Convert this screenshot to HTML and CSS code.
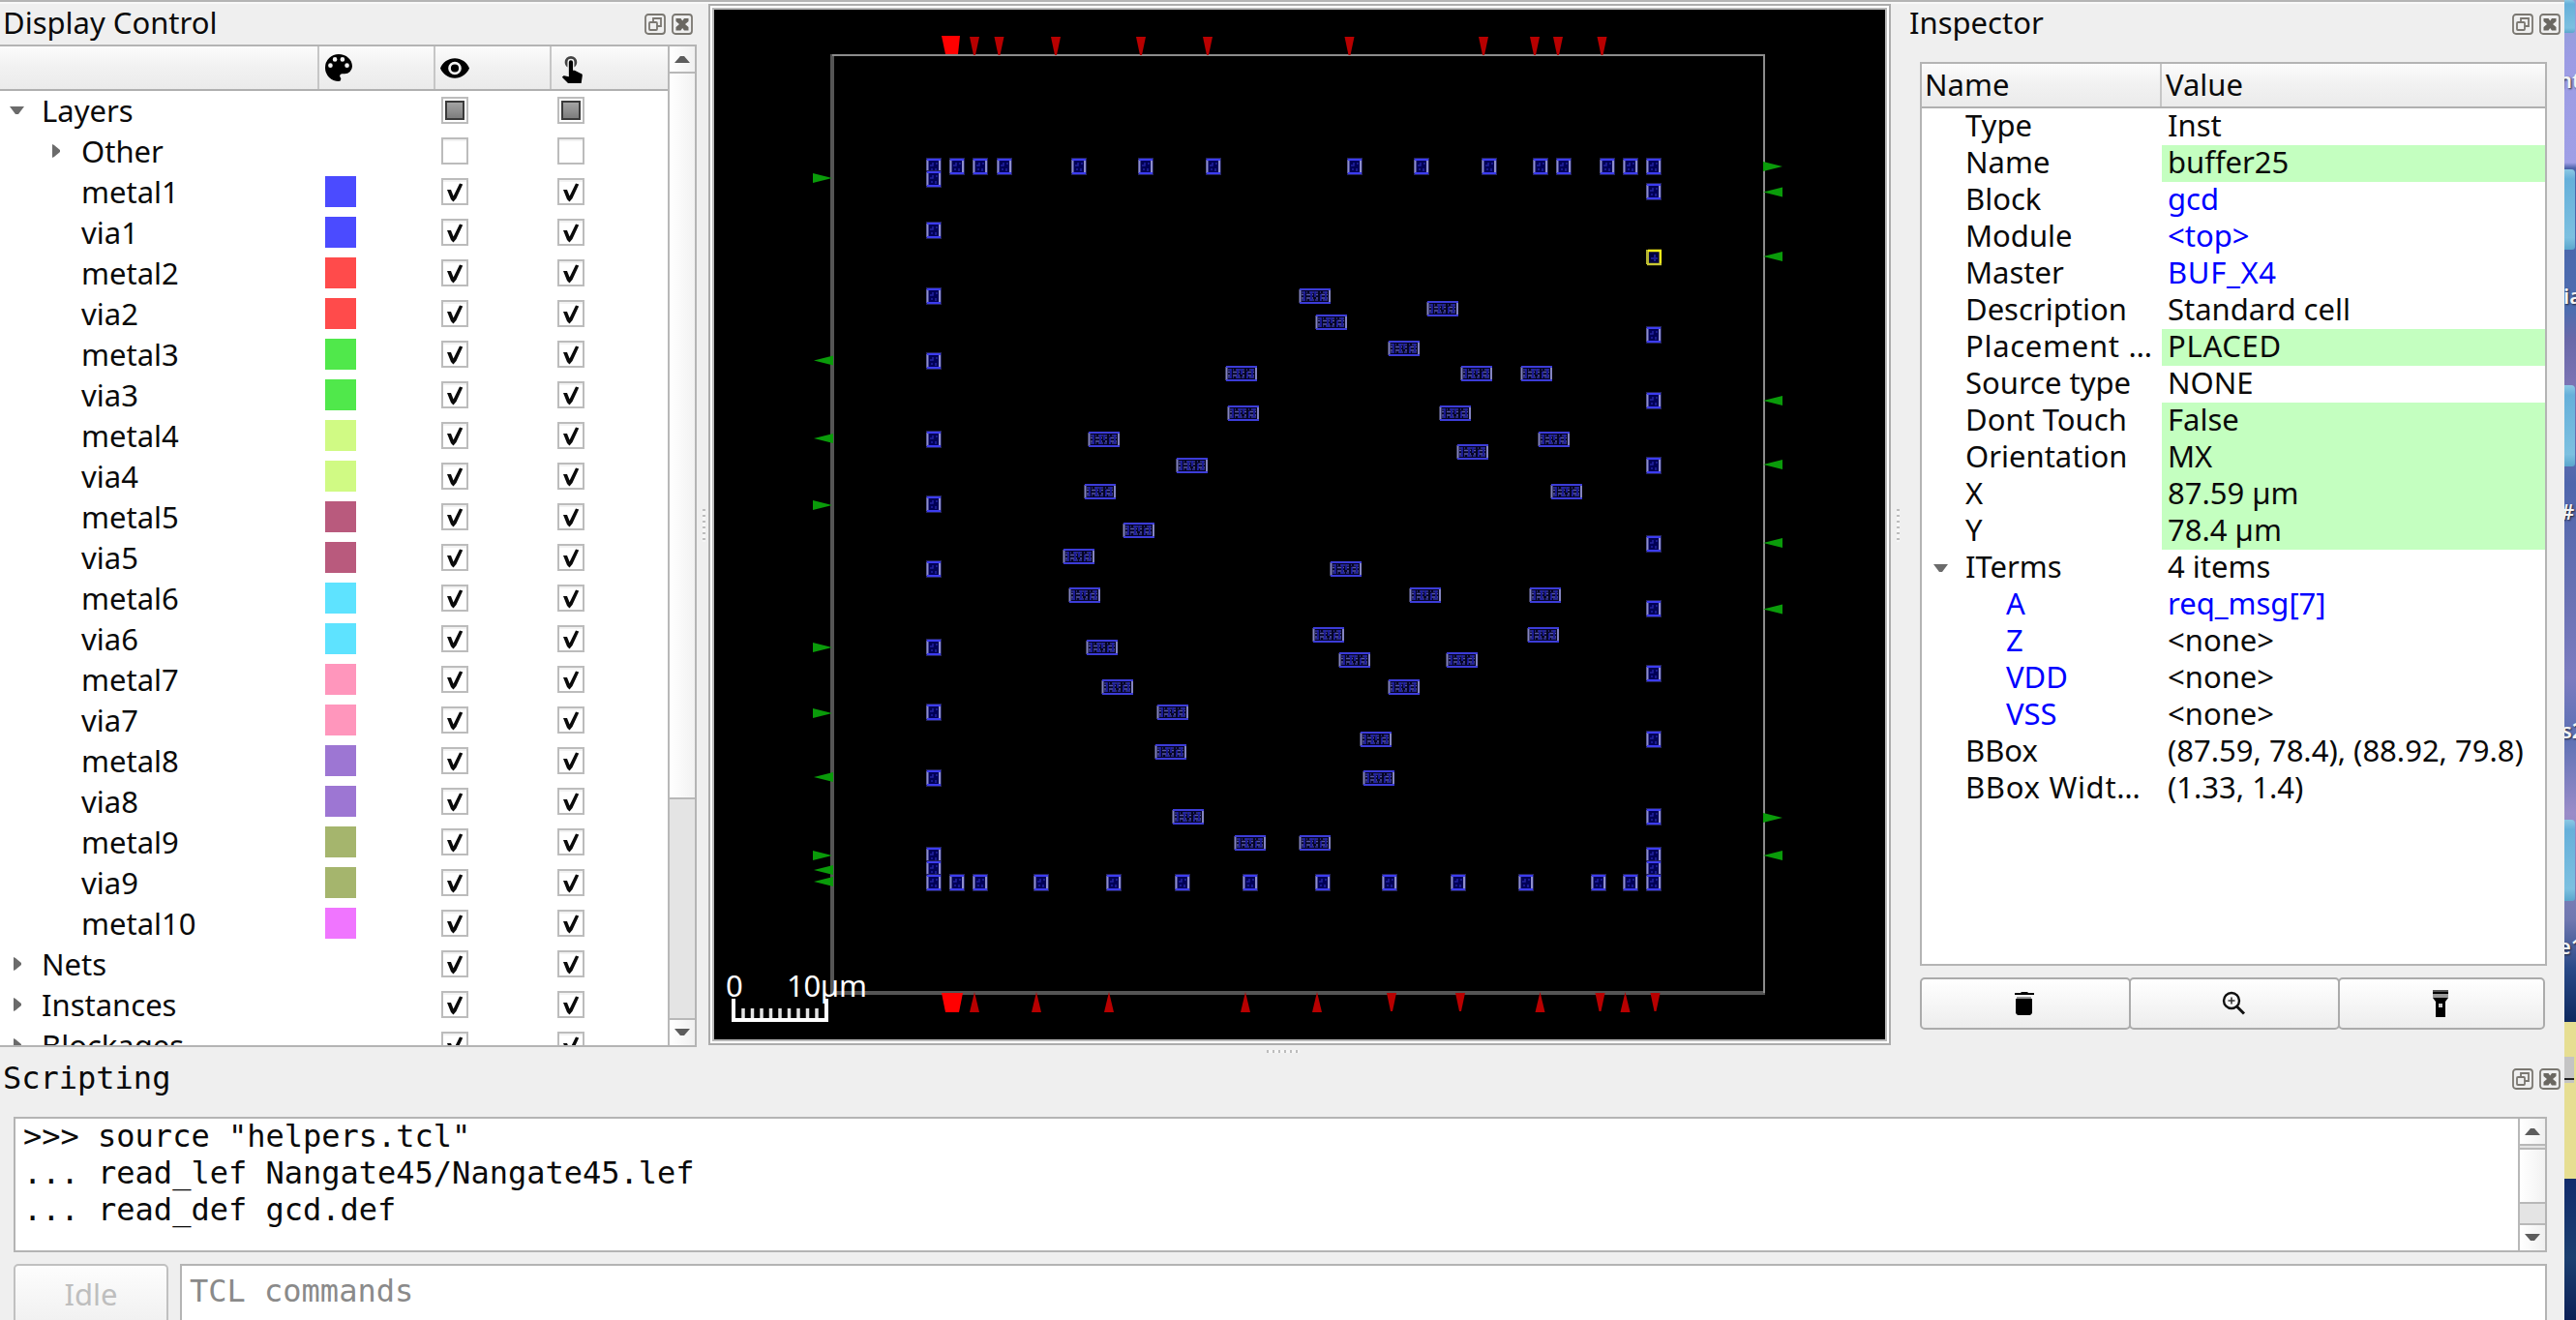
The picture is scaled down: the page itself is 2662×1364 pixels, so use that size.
FILE: index.html
```html
<!DOCTYPE html>
<html lang="en">
<head>
<meta charset="utf-8">
<title>Layout viewer</title>
<link rel="stylesheet" href="styles.css">
</head>
<body>
<svg class="defs" aria-hidden="true">
  <defs>
    <linearGradient id="partialFill" x1="0" y1="0" x2="0" y2="1"><stop offset="0" stop-color="#a6a6a6"/><stop offset="1" stop-color="#7b7b7b"/></linearGradient>
    <symbol id="off" viewBox="0 0 28 28"><rect x="1" y="1" width="26" height="26" fill="#fff" stroke="#bcbcbc" stroke-width="2"/><path d="M2 3h24" stroke="#f2f2f2" stroke-width="2"/></symbol>
    <symbol id="on" viewBox="0 0 28 28"><rect x="1" y="1" width="26" height="26" fill="#fff" stroke="#bcbcbc" stroke-width="2"/><path d="M2 3h24" stroke="#f2f2f2" stroke-width="2"/><path d="M6 12l4 0 2.600 6.500 6.400-13 3.200 1-6.700 14.500-3 3.500-2.500-2.500z" fill="#0a0a0a"/></symbol>
    <symbol id="part" viewBox="0 0 28 28"><rect x="1" y="1" width="26" height="26" fill="#fff" stroke="#bcbcbc" stroke-width="2"/><rect x="5" y="5" width="18" height="18" fill="url(#partialFill)" stroke="#3a3a3a" stroke-width="2"/></symbol>
    <symbol id="float" viewBox="0 0 22 22"><rect x="1" y="1" width="20" height="20" rx="3" fill="none" stroke="#7a7771" stroke-width="1.800"/><path d="M9 9V5h8v8h-4" fill="none" stroke="#7a7771" stroke-width="1.800"/><rect x="5" y="9" width="8" height="8" rx="1" fill="none" stroke="#7a7771" stroke-width="1.800"/></symbol>
    <symbol id="close" viewBox="0 0 22 22"><rect x="1" y="1" width="20" height="20" rx="3" fill="none" stroke="#7a7771" stroke-width="1.800"/><path d="M4.500 5h5l1.700 2.500L13 5h4.500v3l-3.500 3 3.500 3v3.500H13L11.200 15l-1.700 2.500h-5V14L8 11 4.500 8z" fill="#6a6761"/></symbol>
    <symbol id="right" viewBox="0 0 8 14"><path d="M0 0v14l2-1 6-5V6L2 1z" fill="#6b6b6b"/></symbol>
    <symbol id="down" viewBox="0 0 15 8"><path d="M0 0h15L9 8H6z" fill="#6b6b6b"/></symbol>
    <symbol id="up" viewBox="0 0 16 8"><path d="M0 8h16L10 1H6z" fill="#5c5c5c"/></symbol>
    <symbol id="buf" viewBox="0 0 16 18"><rect x="0" y="0" width="16" height="18" fill="#24245a"/><rect x="1" y="1.500" width="14" height="15" fill="#000056"/><path d="M1.500 2v14M14 2v14" stroke="#8e8ecc" stroke-width="2"/><path d="M1 2h14M1 16h14" stroke="#3c3cf0" stroke-width="2.200"/><path d="M4 8h3v-3M5 12h2M10 11v3M11 5v2" stroke="#2222a0" stroke-width="1.500" fill="none"/></symbol>
    <symbol id="sel" viewBox="0 0 16 18"><rect x="2" y="2" width="13" height="14" fill="#00003c"/><path d="M5 10h7M9 6v7" stroke="#1c1c90" stroke-width="2"/><path d="M0 1h3v15H0z" fill="#b4b432"/><path d="M2 2h12.800v14" stroke="#fff31a" stroke-width="2.400" fill="none"/><path d="M1 16h15" stroke="#c8c832" stroke-width="2.400"/></symbol>
    <symbol id="dff" viewBox="0 0 34 18"><rect x="1" y="1" width="32" height="16" fill="#050524"/><g fill="none" stroke-width="1.500"><path d="M3 5h28M3 13h28" stroke="#34349a" stroke-dasharray="3 2 1 2 5 1"/><path d="M3 7.500h28M3 11h28" stroke="#5656a8" stroke-dasharray="2 3 4 2 1 3"/><path d="M6 4v10M13 4v10M17 4v6M23 7v7M28 4v9" stroke="#2222b4"/></g><path d="M1.500 2v14M32 2v14" stroke="#8484c0" stroke-width="2"/><path d="M1 2h32M1 16h32" stroke="#3c3cd8" stroke-width="2"/></symbol>
    <path id="td" d="M-5 0H5L1 19H-1z"/>
    <path id="tu" d="M0 0L5 21H-5z"/>
    <path id="tr" d="M0-5L20 0 0 5z"/>
    <path id="tl" d="M20-5L0 0 20 5z"/>
  </defs>
</svg>
<div class="screen">
<main class="window">
  <div class="upper">
    <section class="dock control">
      <header class="dock-title"><h2>Display Control</h2><svg class="btn"><use href="#float"/></svg><svg class="btn"><use href="#close"/></svg></header>
      <div class="tree-frame">
        <div class="tree">
          <div class="row head">
            <span></span>
            <span><svg class="i-pal" viewBox="3 3 18 18"><path d="M12 3a9 9 0 0 0 0 18 1.500 1.500 0 0 0 1.500-1.500c0-.4-.15-.74-.39-1.010-.23-.26-.38-.61-.38-.99 0-.83.67-1.500 1.500-1.500H16a5 5 0 0 0 5-5c0-4.420-4.030-8-9-8zm-5.500 9a1.500 1.500 0 1 1 0-3 1.500 1.500 0 0 1 0 3zm3-4a1.500 1.500 0 1 1 0-3 1.500 1.500 0 0 1 0 3zm5 0a1.500 1.500 0 1 1 0-3 1.500 1.500 0 0 1 0 3zm3 4a1.500 1.500 0 1 1 0-3 1.500 1.500 0 0 1 0 3z"/></svg></span>
            <span><svg class="i-eye" viewBox="1 4.500 22 15"><path d="M12 4.500C7 4.500 2.730 7.610 1 12c1.730 4.390 6 7.500 11 7.500s9.270-3.110 11-7.500c-1.730-4.390-6-7.500-11-7.500zM12 17a5 5 0 1 1 0-10 5 5 0 0 1 0 10zm0-8a3 3 0 1 0 0 6 3 3 0 0 0 0-6z"/></svg></span>
            <span><svg class="i-tap" viewBox="4.500 3 15.500 20"><path d="M9 11.240V7.500a2.500 2.500 0 0 1 5 0v3.740c1.210-.81 2-2.180 2-3.740a4.500 4.500 0 0 0-9 0c0 1.560.79 2.930 2 3.740z" fill="#444"/><path d="M18.840 15.870l-4.540-2.260c-.17-.07-.35-.11-.54-.11H13v-6a1.500 1.500 0 0 0-3 0v10.740l-3.430-.72c-.3-.05-.6.040-.8.240l-.79.800 4.940 4.940c.27.270.650.440 1.060.44h6.790c.75 0 1.330-.55 1.440-1.280l.75-5.270c.1-.62-.2-1.240-.720-1.520z"/></svg></span>
          </div>
          <div class="row"><b class="ar open"><svg viewBox="0 0 15 8"><use href="#down"/></svg></b><span class="nm">Layers</span><svg class="cb"><use href="#part"/></svg><svg class="cb"><use href="#part"/></svg></div>
          <div class="row sub"><b class="ar"><svg viewBox="0 0 8 14"><use href="#right"/></svg></b><span class="nm">Other</span><svg class="cb"><use href="#off"/></svg><svg class="cb"><use href="#off"/></svg></div>
          <div class="row sub"><span class="nm">metal1</span><i class="sw c1"></i><svg class="cb"><use href="#on"/></svg><svg class="cb"><use href="#on"/></svg></div>
          <div class="row sub"><span class="nm">via1</span><i class="sw c1"></i><svg class="cb"><use href="#on"/></svg><svg class="cb"><use href="#on"/></svg></div>
          <div class="row sub"><span class="nm">metal2</span><i class="sw c2"></i><svg class="cb"><use href="#on"/></svg><svg class="cb"><use href="#on"/></svg></div>
          <div class="row sub"><span class="nm">via2</span><i class="sw c2"></i><svg class="cb"><use href="#on"/></svg><svg class="cb"><use href="#on"/></svg></div>
          <div class="row sub"><span class="nm">metal3</span><i class="sw c3"></i><svg class="cb"><use href="#on"/></svg><svg class="cb"><use href="#on"/></svg></div>
          <div class="row sub"><span class="nm">via3</span><i class="sw c3"></i><svg class="cb"><use href="#on"/></svg><svg class="cb"><use href="#on"/></svg></div>
          <div class="row sub"><span class="nm">metal4</span><i class="sw c4"></i><svg class="cb"><use href="#on"/></svg><svg class="cb"><use href="#on"/></svg></div>
          <div class="row sub"><span class="nm">via4</span><i class="sw c4"></i><svg class="cb"><use href="#on"/></svg><svg class="cb"><use href="#on"/></svg></div>
          <div class="row sub"><span class="nm">metal5</span><i class="sw c5"></i><svg class="cb"><use href="#on"/></svg><svg class="cb"><use href="#on"/></svg></div>
          <div class="row sub"><span class="nm">via5</span><i class="sw c5"></i><svg class="cb"><use href="#on"/></svg><svg class="cb"><use href="#on"/></svg></div>
          <div class="row sub"><span class="nm">metal6</span><i class="sw c6"></i><svg class="cb"><use href="#on"/></svg><svg class="cb"><use href="#on"/></svg></div>
          <div class="row sub"><span class="nm">via6</span><i class="sw c6"></i><svg class="cb"><use href="#on"/></svg><svg class="cb"><use href="#on"/></svg></div>
          <div class="row sub"><span class="nm">metal7</span><i class="sw c7"></i><svg class="cb"><use href="#on"/></svg><svg class="cb"><use href="#on"/></svg></div>
          <div class="row sub"><span class="nm">via7</span><i class="sw c7"></i><svg class="cb"><use href="#on"/></svg><svg class="cb"><use href="#on"/></svg></div>
          <div class="row sub"><span class="nm">metal8</span><i class="sw c8"></i><svg class="cb"><use href="#on"/></svg><svg class="cb"><use href="#on"/></svg></div>
          <div class="row sub"><span class="nm">via8</span><i class="sw c8"></i><svg class="cb"><use href="#on"/></svg><svg class="cb"><use href="#on"/></svg></div>
          <div class="row sub"><span class="nm">metal9</span><i class="sw c9"></i><svg class="cb"><use href="#on"/></svg><svg class="cb"><use href="#on"/></svg></div>
          <div class="row sub"><span class="nm">via9</span><i class="sw c9"></i><svg class="cb"><use href="#on"/></svg><svg class="cb"><use href="#on"/></svg></div>
          <div class="row sub"><span class="nm">metal10</span><i class="sw c10"></i><svg class="cb"><use href="#on"/></svg><svg class="cb"><use href="#on"/></svg></div>
          <div class="row"><b class="ar"><svg viewBox="0 0 8 14"><use href="#right"/></svg></b><span class="nm">Nets</span><svg class="cb"><use href="#on"/></svg><svg class="cb"><use href="#on"/></svg></div>
          <div class="row"><b class="ar"><svg viewBox="0 0 8 14"><use href="#right"/></svg></b><span class="nm">Instances</span><svg class="cb"><use href="#on"/></svg><svg class="cb"><use href="#on"/></svg></div>
          <div class="row"><b class="ar"><svg viewBox="0 0 8 14"><use href="#right"/></svg></b><span class="nm">Blockages</span><svg class="cb"><use href="#on"/></svg><svg class="cb"><use href="#on"/></svg></div>
        </div>
        <div class="scroll">
          <div class="sbtn"><svg viewBox="0 0 16 8"><use href="#up"/></svg></div>
          <div class="thumb tall"></div>
          <div class="groove"></div>
          <div class="sbtn last"><svg class="flip" viewBox="0 0 16 8"><use href="#up"/></svg></div>
        </div>
      </div>
    </section>
    <div class="split"><i></i></div>
    <section class="view"><div class="view-in">
      <svg viewBox="738 10 1210 1064">
        <g fill="#555"><rect x="858" y="56" width="4" height="972"/><rect x="858" y="1024" width="966" height="4"/></g>
        <path d="M860 57H1823V1026" fill="none" stroke="#8c8c8c" stroke-width="2"/>
        <g fill="#b80000">
          <path d="M973 37h19l-2 19h-13z" fill="#ff0000"/>
          <use href="#td" x="1007" y="38"/><use href="#td" x="1032.500" y="38"/><use href="#td" x="1091" y="38"/><use href="#td" x="1179" y="38"/><use href="#td" x="1248" y="38"/><use href="#td" x="1394.500" y="38"/><use href="#td" x="1533" y="38"/><use href="#td" x="1586" y="38"/><use href="#td" x="1610" y="38"/><use href="#td" x="1655.500" y="38"/>
          <path d="M973 1026h22l-4 20h-14z" fill="#ff0000"/>
          <use href="#tu" x="1007" y="1025"/><use href="#tu" x="1071" y="1025"/><use href="#tu" x="1146" y="1025"/><use href="#tu" x="1287" y="1025"/><use href="#tu" x="1361" y="1025"/><use href="#td" x="1438" y="1026"/><use href="#td" x="1509" y="1026"/><use href="#tu" x="1591.500" y="1025"/><use href="#td" x="1653.500" y="1026"/><use href="#tu" x="1679.500" y="1025"/><use href="#td" x="1710.500" y="1026"/>
        </g>
        <g fill="#0a9b0a">
          <use href="#tr" x="840" y="184"/><use href="#tl" x="841" y="372.500"/><use href="#tl" x="841" y="453"/><use href="#tr" x="840" y="522"/><use href="#tr" x="840" y="669"/><use href="#tr" x="840" y="737"/><use href="#tl" x="841" y="803"/><use href="#tr" x="840" y="884"/><use href="#tl" x="841" y="899"/><use href="#tl" x="841" y="911"/>
          <use href="#tr" x="1822" y="172"/><use href="#tl" x="1822" y="198.500"/><use href="#tl" x="1822" y="265"/><use href="#tl" x="1822" y="414"/><use href="#tl" x="1822" y="480"/><use href="#tl" x="1822" y="561"/><use href="#tl" x="1822" y="629.500"/><use href="#tr" x="1822" y="845"/><use href="#tl" x="1822" y="884"/>
        </g>
        <g transform="translate(-8 -9)">
          <use href="#buf" width="16" height="18" x="965" y="172"/><use href="#buf" width="16" height="18" x="989" y="172"/><use href="#buf" width="16" height="18" x="1013" y="172"/><use href="#buf" width="16" height="18" x="1038" y="172"/><use href="#buf" width="16" height="18" x="1115" y="172"/><use href="#buf" width="16" height="18" x="1184" y="172"/><use href="#buf" width="16" height="18" x="1254" y="172"/><use href="#buf" width="16" height="18" x="1400" y="172"/><use href="#buf" width="16" height="18" x="1469" y="172"/><use href="#buf" width="16" height="18" x="1539" y="172"/><use href="#buf" width="16" height="18" x="1592" y="172"/><use href="#buf" width="16" height="18" x="1616" y="172"/><use href="#buf" width="16" height="18" x="1661" y="172"/><use href="#buf" width="16" height="18" x="1685" y="172"/><use href="#buf" width="16" height="18" x="1709" y="172"/>
          <use href="#buf" width="16" height="18" x="965" y="185"/><use href="#buf" width="16" height="18" x="965" y="238"/><use href="#buf" width="16" height="18" x="965" y="306"/><use href="#buf" width="16" height="18" x="965" y="373"/><use href="#buf" width="16" height="18" x="965" y="454"/><use href="#buf" width="16" height="18" x="965" y="521"/><use href="#buf" width="16" height="18" x="965" y="588"/><use href="#buf" width="16" height="18" x="965" y="669"/><use href="#buf" width="16" height="18" x="965" y="736"/><use href="#buf" width="16" height="18" x="965" y="804"/><use href="#buf" width="16" height="18" x="965" y="884"/><use href="#buf" width="16" height="18" x="965" y="898"/><use href="#buf" width="16" height="18" x="965" y="912"/>
          <use href="#buf" width="16" height="18" x="1709" y="198"/><use href="#sel" width="16" height="18" x="1709" y="266"/><use href="#buf" width="16" height="18" x="1709" y="346"/><use href="#buf" width="16" height="18" x="1709" y="414"/><use href="#buf" width="16" height="18" x="1709" y="481"/><use href="#buf" width="16" height="18" x="1709" y="562"/><use href="#buf" width="16" height="18" x="1709" y="629"/><use href="#buf" width="16" height="18" x="1709" y="696"/><use href="#buf" width="16" height="18" x="1709" y="764"/><use href="#buf" width="16" height="18" x="1709" y="844"/><use href="#buf" width="16" height="18" x="1709" y="884"/><use href="#buf" width="16" height="18" x="1709" y="898"/><use href="#buf" width="16" height="18" x="1709" y="912"/>
          <use href="#buf" width="16" height="18" x="989" y="912"/><use href="#buf" width="16" height="18" x="1013" y="912"/><use href="#buf" width="16" height="18" x="1076" y="912"/><use href="#buf" width="16" height="18" x="1151" y="912"/><use href="#buf" width="16" height="18" x="1222" y="912"/><use href="#buf" width="16" height="18" x="1292" y="912"/><use href="#buf" width="16" height="18" x="1367" y="912"/><use href="#buf" width="16" height="18" x="1436" y="912"/><use href="#buf" width="16" height="18" x="1507" y="912"/><use href="#buf" width="16" height="18" x="1577" y="912"/><use href="#buf" width="16" height="18" x="1652" y="912"/><use href="#buf" width="16" height="18" x="1685" y="912"/>
        </g>
        <g transform="translate(-17 -9)">
          <use href="#dff" width="34" height="18" x="1283" y="386"/><use href="#dff" width="34" height="18" x="1285" y="427"/><use href="#dff" width="34" height="18" x="1141" y="454"/><use href="#dff" width="34" height="18" x="1232" y="481"/><use href="#dff" width="34" height="18" x="1137" y="508"/><use href="#dff" width="34" height="18" x="1359" y="306"/><use href="#dff" width="34" height="18" x="1376" y="333"/><use href="#dff" width="34" height="18" x="1491" y="319"/><use href="#dff" width="34" height="18" x="1451" y="360"/><use href="#dff" width="34" height="18" x="1526" y="386"/><use href="#dff" width="34" height="18" x="1588" y="386"/><use href="#dff" width="34" height="18" x="1504" y="427"/><use href="#dff" width="34" height="18" x="1606" y="454"/><use href="#dff" width="34" height="18" x="1522" y="467"/><use href="#dff" width="34" height="18" x="1619" y="508"/>
          <use href="#dff" width="34" height="18" x="1177" y="548"/><use href="#dff" width="34" height="18" x="1115" y="575"/><use href="#dff" width="34" height="18" x="1121" y="615"/><use href="#dff" width="34" height="18" x="1139" y="669"/><use href="#dff" width="34" height="18" x="1155" y="710"/><use href="#dff" width="34" height="18" x="1212" y="736"/><use href="#dff" width="34" height="18" x="1210" y="777"/><use href="#dff" width="34" height="18" x="1228" y="844"/><use href="#dff" width="34" height="18" x="1292" y="871"/><use href="#dff" width="34" height="18" x="1359" y="871"/>
          <use href="#dff" width="34" height="18" x="1391" y="588"/><use href="#dff" width="34" height="18" x="1473" y="615"/><use href="#dff" width="34" height="18" x="1597" y="615"/><use href="#dff" width="34" height="18" x="1373" y="656"/><use href="#dff" width="34" height="18" x="1595" y="656"/><use href="#dff" width="34" height="18" x="1400" y="682"/><use href="#dff" width="34" height="18" x="1511" y="682"/><use href="#dff" width="34" height="18" x="1451" y="710"/><use href="#dff" width="34" height="18" x="1422" y="764"/><use href="#dff" width="34" height="18" x="1425" y="804"/>
        </g>
        <path d="M758 1032v22h96v-22" fill="none" stroke="#fff" stroke-width="4"/>
        <path d="M768 1042v10M777.500 1042v10M787 1042v10M796.500 1042v10M806 1042v10M815.500 1042v10M825 1042v10M834.500 1042v10M844 1042v10" stroke="#e4e4e4" stroke-width="3.500"/>
        <text x="750" y="1029.500" class="scale">0</text><text x="813" y="1029.500" class="scale">10µm</text>
      </svg>
    </div></section>
    <div class="split right"><i></i></div>
    <section class="dock inspector">
      <header class="dock-title"><h2>Inspector</h2><svg class="btn"><use href="#float"/></svg><svg class="btn"><use href="#close"/></svg></header>
      <div class="props">
        <div class="prop phead"><span>Name</span><span>Value</span></div>
        <div class="prop"><span>Type</span><span>Inst</span></div>
        <div class="prop edit"><span>Name</span><span>buffer25</span></div>
        <div class="prop link"><span>Block</span><span>gcd</span></div>
        <div class="prop link"><span>Module</span><span>&lt;top&gt;</span></div>
        <div class="prop link"><span>Master</span><span class="caps">BUF_X4</span></div>
        <div class="prop"><span>Description</span><span>Standard cell</span></div>
        <div class="prop edit"><span class="cut">Placement …</span><span class="caps">PLACED</span></div>
        <div class="prop"><span>Source type</span><span>NONE</span></div>
        <div class="prop edit"><span>Dont Touch</span><span>False</span></div>
        <div class="prop edit"><span>Orientation</span><span>MX</span></div>
        <div class="prop edit"><span>X</span><span>87.59 µm</span></div>
        <div class="prop edit"><span>Y</span><span>78.4 µm</span></div>
        <div class="prop parent"><b class="ar open"><svg viewBox="0 0 15 8"><use href="#down"/></svg></b><span>ITerms</span><span>4 items</span></div>
        <div class="prop child link"><span>A</span><span>req_msg[7]</span></div>
        <div class="prop child"><span>Z</span><span>&lt;none&gt;</span></div>
        <div class="prop child"><span>VDD</span><span>&lt;none&gt;</span></div>
        <div class="prop child"><span>VSS</span><span>&lt;none&gt;</span></div>
        <div class="prop"><span>BBox</span><span>(87.59, 78.4), (88.92, 79.8)</span></div>
        <div class="prop"><span class="cut">BBox Widt…</span><span>(1.33, 1.4)</span></div>
      </div>
      <div class="actions">
        <button><svg width="20" height="26" viewBox="0 0 20 26"><path d="M0 2h6l1-1h6l1 1h6v2H0zM1 8h17v15l-2 2H3l-2-2z"/><path d="M2 6h15v2H2z" fill="#999"/></svg></button>
        <button><svg width="25" height="26" viewBox="0 0 25 26"><circle cx="10" cy="10" r="8" fill="none" stroke="#111" stroke-width="2.400"/><path d="M10 6.500v7M6.500 10h7" stroke="#333" stroke-width="1.600"/><path d="M15.500 16l7.500 7.500" stroke="#111" stroke-width="3"/></svg></button>
        <button><svg width="18" height="28" viewBox="0 0 18 28"><path d="M1 0h16v2H1z" fill="#555"/><path d="M1 2h16v2H1zM1 8h16l-3 4v16H4V12z"/><path d="M1 4h16v4H1z" fill="#999"/><path d="M7 14h4v4H7z" fill="#ccc"/></svg></button>
      </div>
    </section>
  </div>
  <div class="hsplit"><i></i></div>
  <section class="scripting">
    <header class="dock-title mono"><h2>Scripting</h2><svg class="btn"><use href="#float"/></svg><svg class="btn"><use href="#close"/></svg></header>
    <div class="console">
      <pre>&gt;&gt;&gt; source "helpers.tcl"
... read_lef Nangate45/Nangate45.lef
... read_def gcd.def</pre>
      <div class="scroll">
        <div class="sbtn"><svg viewBox="0 0 16 8"><use href="#up"/></svg></div>
        <div class="groove gap"></div>
        <div class="thumb short"></div>
        <div class="groove"></div>
        <div class="sbtn last"><svg class="flip" viewBox="0 0 16 8"><use href="#up"/></svg></div>
      </div>
    </div>
    <div class="entry"><div class="idle">Idle</div><div class="cmd">TCL commands</div></div>
  </section>
</main>
<aside class="desktop">
  <div class="folder f1"></div>
  <span class="lbl l1">nt</span>
  <div class="folder f2"></div>
  <span class="lbl l2">ia</span>
  <div class="folder f3"></div>
  <span class="lbl l3">#</span>
  <span class="lbl l4">s2</span>
  <div class="folder f4"></div>
  <span class="lbl l5">e1</span>
  <div class="note"><i></i></div>
</aside>
</div>
</body>
</html>
```
FILE: styles.css
```css
* { box-sizing: border-box; }
body { margin: 0; overflow: hidden; background: #efefef; font: 31px "Noto Sans", sans-serif; color: #0a0a0a; }
.defs { position: absolute; width: 0; height: 0; }
.screen { display: flex; width: 2662px; height: 1364px; overflow: hidden; }
.window { width: 2650px; height: 1364px; display: flex; flex-direction: column; background: #efefef; border-top: 2px solid #b4b4b4; box-shadow: inset 0 2px #f8f8f8; overflow: hidden; flex: none; z-index: 1; }
.upper { display: flex; height: 1080px; padding-top: 2px; flex: none; }
h2 { margin: 0; font: inherit; flex: 1; line-height: 39px; }
.dock-title { display: flex; padding: 0 4px 0 3px; gap: 6px; }
.btn { width: 22px; height: 22px; margin-top: 10px; }

.control { width: 720px; height: 1078px; display: flex; flex-direction: column; }
.control .dock-title { height: 42px; flex: none; }
.tree-frame { height: 1036px; border: 2px solid #b4b4b4; border-left: 0; background: #fff; display: flex; overflow: hidden; }
.tree { width: 690px; height: 1032px; overflow: hidden; }
.row { display: grid; grid-template-columns: 330px 120px 120px 120px; height: 42px; align-items: center; }
.head { height: 46px; margin-bottom: -1px; background: linear-gradient(#fcfcfc 0, #f1f1f1 50%, #ebebeb); border-bottom: 2px solid #b0b0b0; align-items: stretch; }
.head span { border-right: 2px solid #c6c6c6; display: flex; align-items: center; padding-left: 6px; }
.head span:last-child { border: 0; }
.i-pal { width: 28px; height: 28px; }
.i-eye { width: 30px; height: 21px; margin-left: -1px; }
.i-tap { width: 22px; height: 28px; margin-left: 4px; margin-top: 4px; }
.row .ar { grid-area: 1 / 1; width: 15px; margin-left: 10px; display: flex; justify-content: center; }
.row.sub .ar { margin-left: 50px; }
.ar svg { width: 8px; height: 14px; }
.ar.open svg { width: 15px; height: 8px; }
.nm { grid-area: 1 / 1; padding-left: 43px; line-height: 42px; margin-top: -1px; }
.sub .nm { padding-left: 84px; }
.sw { grid-area: 1 / 2; width: 32px; height: 32px; margin-left: 6px; }
.cb { grid-area: 1 / 3; width: 28px; height: 28px; margin-left: 6px; }
.cb + .cb { grid-area: 1 / 4; }
.c1 { background: #4b4bff; } .c2 { background: #ff4b4b; } .c3 { background: #50e84b; } .c4 { background: #d0fa84; } .c5 { background: #b95a7d; }
.c6 { background: #5ee3ff; } .c7 { background: #ff96bc; } .c8 { background: #9d76d3; } .c9 { background: #a5b56d; } .c10 { background: #f075ff; }

.scroll { width: 28px; border-left: 2px solid #b8b8b8; display: flex; flex-direction: column; background: #e4e4e4; flex: none; }
.sbtn { height: 28px; flex: none; background: linear-gradient(90deg, #fff, #f0f0f0); border-bottom: 2px solid #b8b8b8; display: flex; align-items: center; justify-content: center; }
.sbtn.last { border-bottom: 0; border-top: 2px solid #b8b8b8; }
.sbtn svg { width: 16px; height: 8px; }
.flip { transform: scaleY(-1); }
.thumb { background: linear-gradient(90deg, #fff, #f2f2f2); border-bottom: 2px solid #b8b8b8; flex: none; }
.tall { height: 750px; }
.groove { flex: 1; background: #e4e4e4; }
.gap { flex: none; height: 4px; border-bottom: 2px solid #b8b8b8; }
.short { height: 56px; }

.split { width: 12px; padding: 522px 0 0 6px; flex: none; }
.split i { display: block; width: 3px; height: 34px; background: repeating-linear-gradient(#bdbdbd 0 2px, #f6f6f6 2px 6px); }
.split.right { width: 18px; padding-left: 6px; }
.hsplit { height: 6px; padding: 3px 0 0 1309px; flex: none; }
.hsplit i { display: block; width: 34px; height: 3px; background: repeating-linear-gradient(90deg, #bdbdbd 0 2px, #f6f6f6 2px 6px); }
.view { width: 1222px; height: 1076px; border: 2px solid #acacac; background: #fff; padding: 2px; flex: none; }
.view-in { width: 1214px; height: 1068px; border: 2px solid #b8b8b8; background: #000; }
.view-in svg { display: block; width: 1210px; height: 1064px; }
.scale { font: 31px "Noto Sans", sans-serif; fill: #fff; letter-spacing: -.3px; }

.inspector { width: 678px; }
.inspector .dock-title { padding-left: 1px; height: 60px; }
.props { width: 648px; height: 934px; margin-left: 12px; border: 2px solid #b4b4b4; background: #fff; }
.prop { position: relative; display: grid; grid-template-columns: 248px 396px; height: 38px; line-height: 35px; white-space: nowrap; }
.prop span:nth-of-type(1) { padding-left: 45px; }
.prop span:nth-of-type(2) { padding-left: 6px; }
.prop.phead { height: 46px; line-height: 42px; background: linear-gradient(#fcfcfc 0, #f1f1f1 50%, #ebebeb); border-bottom: 2px solid #b0b0b0; }
.prop.phead span:nth-of-type(1) { padding-left: 3px; border-right: 2px solid #c6c6c6; }
.prop.phead span:nth-of-type(2) { padding-left: 4px; }
.edit span:nth-of-type(2) { background: #c4ffc0; }
.link span:nth-of-type(2), .child span:nth-of-type(1) { color: #00f; }
.prop.child span:nth-of-type(1) { padding-left: 87px; }
.caps { letter-spacing: .7px; }
.cut { letter-spacing: .7px; }
.parent span:nth-of-type(1) { grid-area: 1 / 1; }
.parent .ar { grid-area: 1 / 1; width: 15px; margin-left: 12px; display: flex; align-items: center; }
.actions { display: flex; margin: 12px 0 0 12px; }
button { height: 54px; width: 218px; margin: 0 -2px 0 0; padding: 0; border: 2px solid #ababab; border-radius: 5px; background: linear-gradient(#fff, #ededed); display: flex; align-items: center; justify-content: center; }
button svg { margin-right: 2px; }
button:last-child { width: 214px; }

.scripting { height: 276px; }
.mono { font: 32px "DejaVu Sans Mono", monospace; height: 66px; }
.mono h2 { line-height: 52px; }
.mono .btn { margin-top: 16px; }
.console { width: 2618px; height: 140px; margin-left: 14px; border: 2px solid #b4b4b4; background: #fff; display: flex; }
pre { margin: 0; flex: 1; padding: 0 0 0 8px; font: 32px/38px "DejaVu Sans Mono", monospace; margin-top: -1px; }
.entry { display: flex; gap: 12px; margin: 12px 0 0 14px; height: 70px; }
.idle { width: 160px; border: 2px solid #c0c0c0; border-radius: 5px; background: linear-gradient(#fdfdfd, #efefef); color: #bebebe; text-align: center; line-height: 59px; }
.cmd { width: 2446px; border: 2px solid #b4b4b4; background: #fff; color: #8a8a8a; font: 32px/53px "DejaVu Sans Mono", monospace; padding-left: 8px; }

.desktop { position: relative; width: 12px; height: 1364px; overflow: hidden; background: linear-gradient(#8f9fd6 0, #9c9ce4 60px, #9f9fe6 168px, #4a62a8 174px, #4d6db0 320px, #6a68a8 350px, #7c74b4 400px, #4f66ac 500px, #6a72b4 620px, #7c7cc0 700px, #5c70b4 760px, #9a8cc8 840px, #7078b0 950px, #2a4a88 1000px, #0f2a60 1054px, #122c6c 1220px, #1b3f70 1300px, #0c1f56); }
.folder { position: absolute; left: 0; width: 11px; background: linear-gradient(#8cc8e4, #66b0da 12%, #7cc0e0 85%, #5aa6cc); border-radius: 0 4px 3px 0; }
.f1 { top: 0; height: 34px; } .f2 { top: 175px; height: 83px; } .f3 { top: 398px; height: 84px; } .f4 { top: 847px; height: 84px; }
.lbl { position: absolute; color: #f4f4f4; font: 600 22px/24px "Noto Sans", sans-serif; text-shadow: 1px 1px 2px #223; }
.l1 { top: 70px; left: -6px; } .l2 { top: 293px; left: -1px; } .l3 { top: 516px; left: -4px; } .l4 { top: 742px; left: -3px; } .l5 { top: 965px; left: -6px; }
.note { position: absolute; top: 1056px; left: 0; width: 12px; height: 162px; background: #e6de92; }
.note i { display: block; margin-top: 36px; width: 10px; height: 27px; background: #c4c4c4; border-bottom: 3px solid #c4c4c4; box-shadow: inset 0 -2px #222; }
```
